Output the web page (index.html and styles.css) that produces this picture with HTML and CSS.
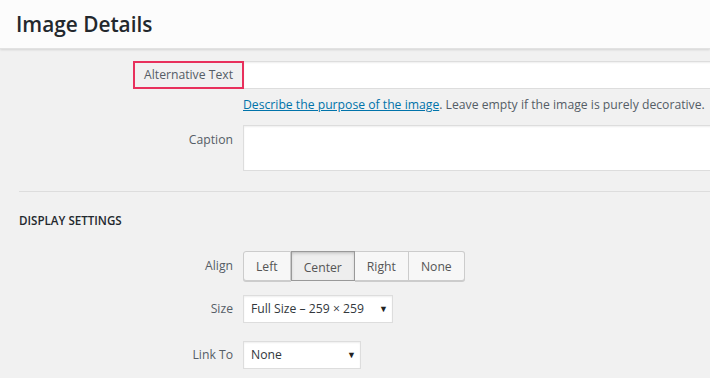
FILE: index.html
```html
<!DOCTYPE html>
<html lang="en">
<head>
<meta charset="UTF-8">
<meta name="viewport" content="width=device-width, initial-scale=1.0">
<title>Image Details</title>
<link rel="stylesheet" href="styles.css">
</head>
<body>
<div class="header"><h1>Image Details</h1></div>
<div class="content">
  <div class="row alt-row">
    <label class="lbl"><span class="highlight">Alternative Text</span></label>
    <input type="text" class="field">
  </div>
  <p class="desc"><a href="#">Describe the purpose of the image</a>. Leave empty if the image is purely decorative.</p>
  <div class="row caption-row">
    <label class="lbl">Caption</label>
    <textarea class="field area"></textarea>
  </div>
  <hr class="divider">
  <h2 class="section">Display Settings</h2>
  <div class="row align-row">
    <label class="lbl">Align</label>
    <div class="btn-group">
      <button>Left</button>
      <button class="active">Center</button>
      <button>Right</button>
      <button>None</button>
    </div>
  </div>
  <div class="row size-row">
    <label class="lbl">Size</label>
    <div class="select size-select">Full Size – 259 × 259<span class="arrow">▼</span></div>
  </div>
  <div class="row link-row">
    <label class="lbl">Link To</label>
    <div class="select link-select">None<span class="arrow">▼</span></div>
  </div>
</div>
</body>
</html>
```

FILE: styles.css
```css
body {
  margin: 0;
  padding: 0;
  background-color: #f1f1f1;
  font-family: "Open Sans", "Noto Sans", Arial, sans-serif;
  font-size: 12.2px;
  color: #555d66;
  overflow: hidden;
}

.header {
  background-color: #fcfcfc;
  height: 49px;
  box-shadow: 0 1px 2px rgba(0, 0, 0, 0.12);
  border-bottom: 1px solid #e2e2e2;
  box-sizing: border-box;
}

.header h1 {
  margin: 0;
  padding: 9px 0 0 16px;
  font-size: 20.8px;
  font-weight: 600;
  color: #23282d;
  line-height: 30px;
}

.content {
  padding-left: 19px;
  width: 800px;
}

.row {
  display: grid;
  grid-template-columns: 224px 1fr;
  align-items: start;
}

.lbl {
  text-align: right;
  padding-right: 10px;
  line-height: 28px;
}

.alt-row {
  margin-top: 12px;
}

.highlight {
  display: inline-block;
  border: 2px solid #e8305c;
  height: 24px;
  line-height: 24px;
  padding: 0 9px 0 9px;
  margin-right: -11px;
  position: relative;
  z-index: 1;
}

.field {
  box-sizing: border-box;
  height: 28px;
  width: 480px;
  margin: 0;
  border: 1px solid #ddd;
  background: #fff;
  box-shadow: inset 0 1px 2px rgba(0, 0, 0, 0.07);
  font-family: inherit;
}

.area {
  height: 46px;
  resize: none;
}

.desc {
  margin: 7px 0 11px 224px;
  line-height: 18px;
  white-space: nowrap;
}

.desc a {
  color: #0073aa;
}

.caption-row .lbl {
  line-height: 30px;
}

.divider {
  border: 0;
  border-top: 1px solid #ddd;
  margin: 20px 0 0 0;
}

.section {
  margin: 21px 0 22px 0;
  font-size: 11.6px;
  font-weight: 600;
  text-transform: uppercase;
  color: #23282d;
  line-height: 16px;
}

.align-row .lbl {
  line-height: 30px;
}

.btn-group {
  display: flex;
}

.btn-group button {
  height: 30px;
  margin: 0;
  padding: 0 12px;
  font-family: inherit;
  font-size: 12.2px;
  color: #555;
  background: #f7f7f7;
  border: 1px solid #ccc;
  border-left: 0;
  box-shadow: 0 1px 0 #ccc;
  cursor: pointer;
}

.btn-group button:first-child {
  border-left: 1px solid #ccc;
  border-radius: 3px 0 0 3px;
}

.btn-group button:last-child {
  border-radius: 0 3px 3px 0;
}

.btn-group button.active {
  background: #eee;
  border: 1px solid #999;
  box-shadow: inset 0 2px 5px -3px rgba(0, 0, 0, 0.5);
  padding-top: 2px;
}

.size-row {
  margin-top: 14px;
}

.link-row {
  margin-top: 18px;
}

.select {
  box-sizing: border-box;
  height: 28px;
  line-height: 26px;
  border: 1px solid #ddd;
  background: #fff;
  padding: 0 4px 0 7px;
  color: #32373c;
  display: flex;
  justify-content: space-between;
  white-space: nowrap;
  box-shadow: inset 0 1px 2px rgba(0, 0, 0, 0.07);
}

.size-select {
  width: 150px;
}

.link-select {
  width: 118px;
}

.arrow {
  font-size: 9px;
  color: #222;
}
```
